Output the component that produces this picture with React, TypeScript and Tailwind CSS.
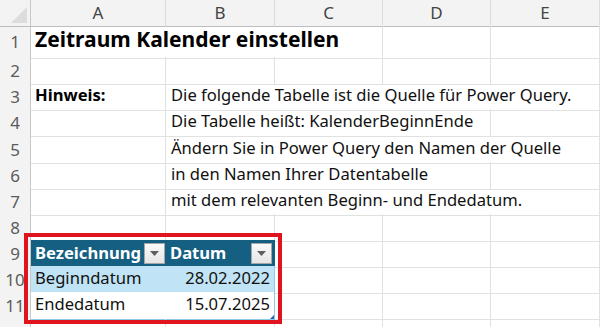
import React from "react";

const COLS = "grid-cols-[31px_135px_109px_108px_108px_109px]";

function RowHead({ n }: { n?: number }) {
  return (
    <div className="flex items-center justify-center border-r border-b border-r-[#c8c8c8] border-b-[#dcdcdc] bg-[#f3f3f3] pt-[1px] text-[17px] text-[#5b5b5b]">
      {n}
    </div>
  );
}

function Cell({ children, className = "" }: { children?: React.ReactNode; className?: string }) {
  return (
    <div className={`flex items-end overflow-visible whitespace-nowrap border-r border-b border-[#e1e1e1] pb-[2px] ${className}`}>
      {children}
    </div>
  );
}

function Row({ n, h = "h-[26px]", children }: { n?: number; h?: string; children: React.ReactNode }) {
  return (
    <div className={`grid ${COLS} ${h}`}>
      <RowHead n={n} />
      {children}
    </div>
  );
}

function DropBtn() {
  return (
    <div className="flex h-[21px] w-[21px] shrink-0 items-center justify-center border border-[#a6a6a6] bg-gradient-to-b from-[#fafafa] to-[#e6e6e6]">
      <svg width="9" height="5" viewBox="0 0 9 5">
        <path d="M0 0 L9 0 L4.5 5 Z" fill="#5f5f5f" />
      </svg>
    </div>
  );
}

export default function App() {
  return (
    <div
      className="relative h-[327px] w-[600px] overflow-hidden bg-white text-[16.6px] text-[#111]"
      style={{ fontFamily: '"Noto Sans", "Open Sans", sans-serif' }}
    >
      {/* column header */}
      <div className={`grid ${COLS} h-[24px]`}>
        <div className="relative border-r border-b border-r-[#c8c8c8] border-b-[#bdbdbd] bg-[#f3f3f3]">
          <svg className="absolute right-[3px] bottom-[3px]" width="16" height="16" viewBox="0 0 16 16">
            <path d="M16 0 L16 16 L0 16 Z" fill="#dcdcdc" />
          </svg>
        </div>
        {["A", "B", "C", "D", "E"].map((c) => (
          <div
            key={c}
            className="flex items-center justify-center border-r border-b border-r-[#dcdcdc] border-b-[#bdbdbd] bg-[#f3f3f3] text-[17px] text-[#444]"
          >
            {c}
          </div>
        ))}
      </div>

      <Row n={1} h="h-[33px]">
        <Cell className="col-span-3 pl-[4px] text-[21px] font-bold text-black">Zeitraum Kalender einstellen</Cell>
        <Cell />
        <Cell />
      </Row>
      <Row n={2}>
        <Cell />
        <Cell />
        <Cell />
        <Cell />
        <Cell />
      </Row>
      <Row n={3}>
        <Cell className="pl-[4px] font-bold text-black">Hinweis:</Cell>
        <Cell className="col-span-4 pl-[5px]">Die folgende Tabelle ist die Quelle für Power Query.</Cell>
      </Row>
      <Row n={4} h="h-[27px]">
        <Cell />
        <Cell className="col-span-3 pl-[5px]">Die Tabelle heißt: KalenderBeginnEnde</Cell>
        <Cell />
      </Row>
      <Row n={5}>
        <Cell />
        <Cell className="col-span-4 pl-[5px]">Ändern Sie in Power Query den Namen der Quelle</Cell>
      </Row>
      <Row n={6}>
        <Cell />
        <Cell className="col-span-3 pl-[5px]">in den Namen Ihrer Datentabelle</Cell>
        <Cell />
      </Row>
      <Row n={7}>
        <Cell />
        <Cell className="col-span-4 pl-[5px]">mit dem relevanten Beginn- und Endedatum.</Cell>
      </Row>
      <Row n={8}>
        <Cell />
        <Cell />
        <Cell />
        <Cell />
        <Cell />
      </Row>
      <Row n={9}>
        <div className="flex items-center justify-between border-b border-[#156082] bg-[#156082] pl-[4px] pr-[1px] font-bold text-white">
          <span>Bezeichnung</span>
          <DropBtn />
        </div>
        <div className="flex items-center justify-between border-r border-b border-[#156082] bg-[#156082] pl-[4px] pr-[2px] font-bold text-white">
          <span>Datum</span>
          <DropBtn />
        </div>
        <Cell />
        <Cell />
        <Cell />
      </Row>
      <Row n={10}>
        <div className="flex items-end border-b border-[#8ccbe8] bg-[#c0e4f5] pb-[2px] pl-[4px]">Beginndatum</div>
        <div className="flex items-end justify-end border-r border-b border-[#8ccbe8] bg-[#c0e4f5] pb-[2px] pr-[4px]">28.02.2022</div>
        <Cell />
        <Cell />
        <Cell />
      </Row>
      <Row n={11} h="h-[27px]">
        <div className="flex items-end border-b border-[#8ccbe8] bg-white pb-[2px] pl-[4px]">Endedatum</div>
        <div className="relative flex items-end justify-end border-r border-b border-[#8ccbe8] bg-white pb-[2px] pr-[4px]">
          15.07.2025
          <svg className="absolute right-0 bottom-0" width="4" height="4" viewBox="0 0 4 4">
            <path d="M4 0 L4 4 L0 4 Z" fill="#2f5fb0" />
          </svg>
        </div>
        <Cell />
        <Cell />
        <Cell />
      </Row>
      <Row>
        <Cell />
        <Cell />
        <Cell />
        <Cell />
        <Cell />
      </Row>

      {/* red annotation frame */}
      <div className="pointer-events-none absolute left-[24px] top-[233px] h-[91px] w-[258px] border-[4px] border-[#e0141e]" />
    </div>
  );
}
